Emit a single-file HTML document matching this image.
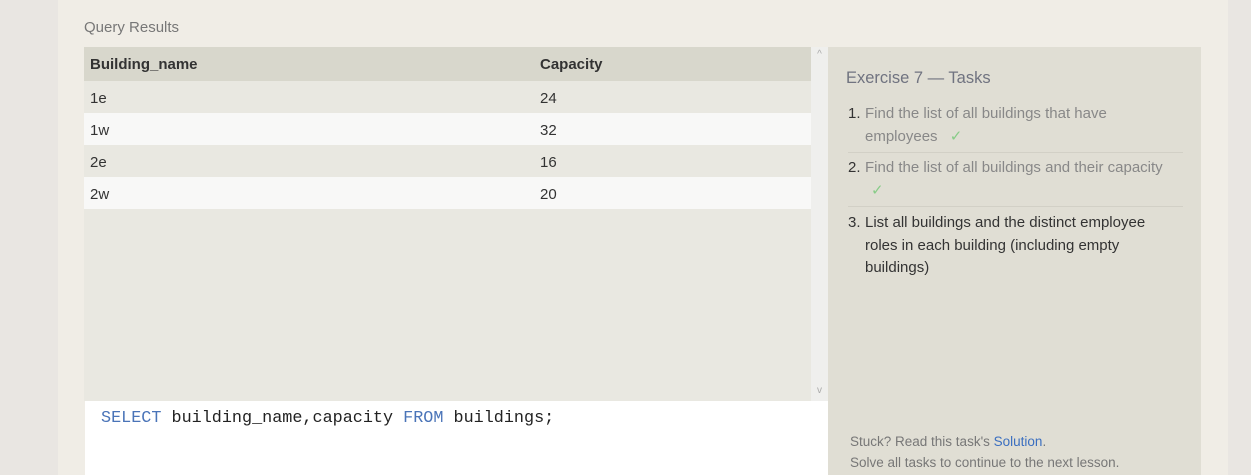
<!DOCTYPE html>
<html><head><style>
body{margin:0;width:1251px;height:475px;background:#e9e6e2;font-family:"Liberation Sans",sans-serif;position:relative;overflow:hidden}
.card{position:absolute;left:58px;top:0;width:1170px;height:475px;background:#f0ede6}
.ab{position:absolute}
.t{position:absolute;left:84px;top:47px;width:727px;height:354px;background:#e9e8e1}
.row{position:absolute;left:0;width:727px;height:32px;font-size:15px;color:#333;line-height:35px}
.row span{position:absolute}
</style></head><body>
<div class="card"></div>
<div class="ab" style="left:84px;top:19px;font-size:15px;color:#777">Query Results</div>
<div class="t">
 <div class="row" style="top:0;height:34px;line-height:36px;background:#d8d7cc;font-weight:bold;color:#333"><span style="left:6px">Building_name</span><span style="left:456px">Capacity</span></div>
 <div class="row" style="top:34px;background:#e9e8e1;border-bottom:1px solid #ddd"><span style="left:6px">1e</span><span style="left:456px">24</span></div>
 <div class="row" style="top:66px;background:#f8f8f7;border-bottom:1px solid #ddd"><span style="left:6px">1w</span><span style="left:456px">32</span></div>
 <div class="row" style="top:98px;background:#e9e8e1;border-bottom:1px solid #ddd"><span style="left:6px">2e</span><span style="left:456px">16</span></div>
 <div class="row" style="top:130px;background:#f8f8f7"><span style="left:6px">2w</span><span style="left:456px">20</span></div>
</div>
<div class="ab" style="left:811px;top:47px;width:17px;height:354px;background:#efefed;color:#aaa;font-size:10px;text-align:center">
 <div style="position:absolute;top:2px;width:17px">^</div><div style="position:absolute;top:338px;width:17px">v</div></div>
<div class="ab" style="left:85px;top:401px;width:743px;height:74px;background:#fff"></div>
<div class="ab" style="left:101px;top:409px;font-family:'Liberation Mono',monospace;font-size:16.8px;color:#222;white-space:pre"><span style="color:#4a74b8">SELECT</span> building_name,capacity <span style="color:#4a74b8">FROM</span> buildings;</div>
<div class="ab" style="left:828px;top:47px;width:373px;height:428px;background:#e0ded4"></div>
<div class="ab" style="left:846px;top:69px;font-size:16.5px;color:#707380">Exercise 7 — Tasks</div>
<div class="ab" style="left:848px;top:103px;width:335px;font-size:15px;line-height:22.5px">
 <div style="position:relative;padding-left:17px;padding-bottom:4px;border-bottom:1px solid #d2d0c6;color:#888"><span style="position:absolute;left:0;color:#333">1.</span>Find the list of all buildings that have employees <span style="color:#8c8;margin-left:8px">✓</span></div>
 <div style="position:relative;padding:4px 0 4px 17px;border-bottom:1px solid #d2d0c6;color:#888"><span style="position:absolute;left:0;color:#333">2.</span>Find the list of all buildings and their capacity<br><span style="color:#8c8;margin-left:6px">✓</span></div>
 <div style="position:relative;padding:5px 0 0 17px;color:#333;width:300px"><span style="position:absolute;left:0">3.</span>List all buildings and the distinct employee roles in each building (including empty buildings)</div>
</div>
<div class="ab" style="left:850px;top:432px;font-size:13.5px;line-height:20.5px;color:#777">Stuck? Read this task's <span style="color:#3b6fc0">Solution</span>.<br>Solve all tasks to continue to the next lesson.</div>
</body></html>
